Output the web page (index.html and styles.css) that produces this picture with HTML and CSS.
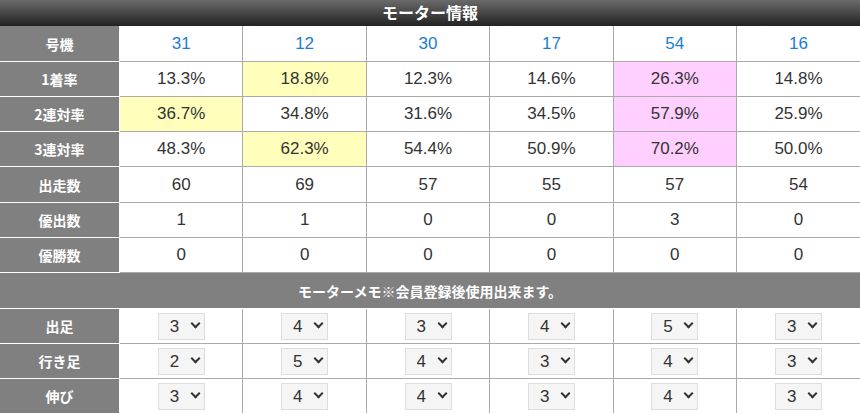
FILE: index.html
```html
<!DOCTYPE html>
<html lang="ja">
<head>
    <meta charset="UTF-8">
    <meta name="viewport" content="width=device-width, initial-scale=1.0">
    <title>モーター情報</title>
    <link rel="stylesheet" href="styles.css">
</head>
<body>
    <div class="motor-box">
        <h2 class="motor-title">モーター情報</h2>
        <table class="motor-table">
            <tr class="tall">
                <th>号機</th>
                <td class="no">31</td><td class="no">12</td><td class="no">30</td><td class="no">17</td><td class="no">54</td><td class="no">16</td>
            </tr>
            <tr>
                <th>1着率</th>
                <td>13.3%</td><td class="top2">18.8%</td><td>12.3%</td><td>14.6%</td><td class="top1">26.3%</td><td>14.8%</td>
            </tr>
            <tr>
                <th>2連対率</th>
                <td class="top2">36.7%</td><td>34.8%</td><td>31.6%</td><td>34.5%</td><td class="top1">57.9%</td><td>25.9%</td>
            </tr>
            <tr>
                <th>3連対率</th>
                <td>48.3%</td><td class="top2">62.3%</td><td>54.4%</td><td>50.9%</td><td class="top1">70.2%</td><td>50.0%</td>
            </tr>
            <tr class="tall">
                <th>出走数</th>
                <td>60</td><td>69</td><td>57</td><td>55</td><td>57</td><td>54</td>
            </tr>
            <tr>
                <th>優出数</th>
                <td>1</td><td>1</td><td>0</td><td>0</td><td>3</td><td>0</td>
            </tr>
            <tr>
                <th>優勝数</th>
                <td>0</td><td>0</td><td>0</td><td>0</td><td>0</td><td>0</td>
            </tr>
            <tr class="tall">
                <th colspan="7" class="memo-head">モーターメモ※会員登録後使用出来ます。</th>
            </tr>
            <tr>
                <th>出足</th>
                <td><span class="pick"><select><option>3</option></select></span></td>
                <td><span class="pick"><select><option>4</option></select></span></td>
                <td><span class="pick"><select><option>3</option></select></span></td>
                <td><span class="pick"><select><option>4</option></select></span></td>
                <td><span class="pick"><select><option>5</option></select></span></td>
                <td><span class="pick"><select><option>3</option></select></span></td>
            </tr>
            <tr>
                <th>行き足</th>
                <td><span class="pick"><select><option>2</option></select></span></td>
                <td><span class="pick"><select><option>5</option></select></span></td>
                <td><span class="pick"><select><option>4</option></select></span></td>
                <td><span class="pick"><select><option>3</option></select></span></td>
                <td><span class="pick"><select><option>4</option></select></span></td>
                <td><span class="pick"><select><option>3</option></select></span></td>
            </tr>
            <tr>
                <th>伸び</th>
                <td><span class="pick"><select><option>3</option></select></span></td>
                <td><span class="pick"><select><option>4</option></select></span></td>
                <td><span class="pick"><select><option>4</option></select></span></td>
                <td><span class="pick"><select><option>3</option></select></span></td>
                <td><span class="pick"><select><option>4</option></select></span></td>
                <td><span class="pick"><select><option>3</option></select></span></td>
            </tr>
        </table>
    </div>
</body>
</html>
```

FILE: styles.css
```css
body {
    margin: 0;
    padding: 0;
    background-color: #fff;
    font-family: "Liberation Sans", Arial, "Noto Sans CJK JP", sans-serif;
    color: #333;
}

.motor-box {
    width: 860px;
}

.motor-title {
    margin: 0;
    height: 26px;
    line-height: 25px;
    text-align: center;
    font-size: 16px;
    font-weight: bold;
    color: #fff;
    font-family: "Noto Sans CJK JP", sans-serif;
    background: linear-gradient(to bottom, #6a6a6a, #222);
}

.motor-table {
    width: 100%;
    border-collapse: collapse;
    table-layout: fixed;
}

.motor-table th {
    width: 119px;
    height: 34px;
    padding: 0;
    background-color: #808080;
    color: #fff;
    font-size: 14px;
    font-weight: bold;
    font-family: "Noto Sans CJK JP", sans-serif;
    border: 1px solid #fff;
    border-left: none;
    text-align: center;
}

.motor-table td {
    height: 34px;
    padding: 0;
    font-size: 17px;
    text-align: center;
    border: 1px solid #aaa;
}

.motor-table tr.tall th,
.motor-table tr.tall td {
    height: 35px;
}

.motor-table tr:first-child th,
.motor-table tr:first-child td {
    border-top: none;
}

.motor-table tr:last-child th,
.motor-table tr:last-child td {
    border-bottom: none;
}

.motor-table td:last-child {
    border-right: none;
}

.motor-table .memo-head {
    border-right: none;
}

.no {
    color: #1a7dd6;
}

.top1 {
    background-color: #ffd0ff;
}

.top2 {
    background-color: #ffffbb;
}

.pick {
    position: relative;
    display: inline-block;
    vertical-align: middle;
}

.pick select {
    appearance: none;
    -webkit-appearance: none;
    display: block;
    width: 47px;
    height: 27px;
    padding: 0 0 0 11px;
    margin: 0;
    background-color: #f5f5f5;
    border: 1px solid #ddd;
    border-radius: 0;
    font-family: "Liberation Sans", Arial, sans-serif;
    font-size: 17px;
    color: #333;
}

.pick::after {
    content: "";
    position: absolute;
    right: 6px;
    top: 7px;
    width: 5px;
    height: 5px;
    border-right: 2px solid #333;
    border-bottom: 2px solid #333;
    transform: rotate(45deg);
    pointer-events: none;
}
```
